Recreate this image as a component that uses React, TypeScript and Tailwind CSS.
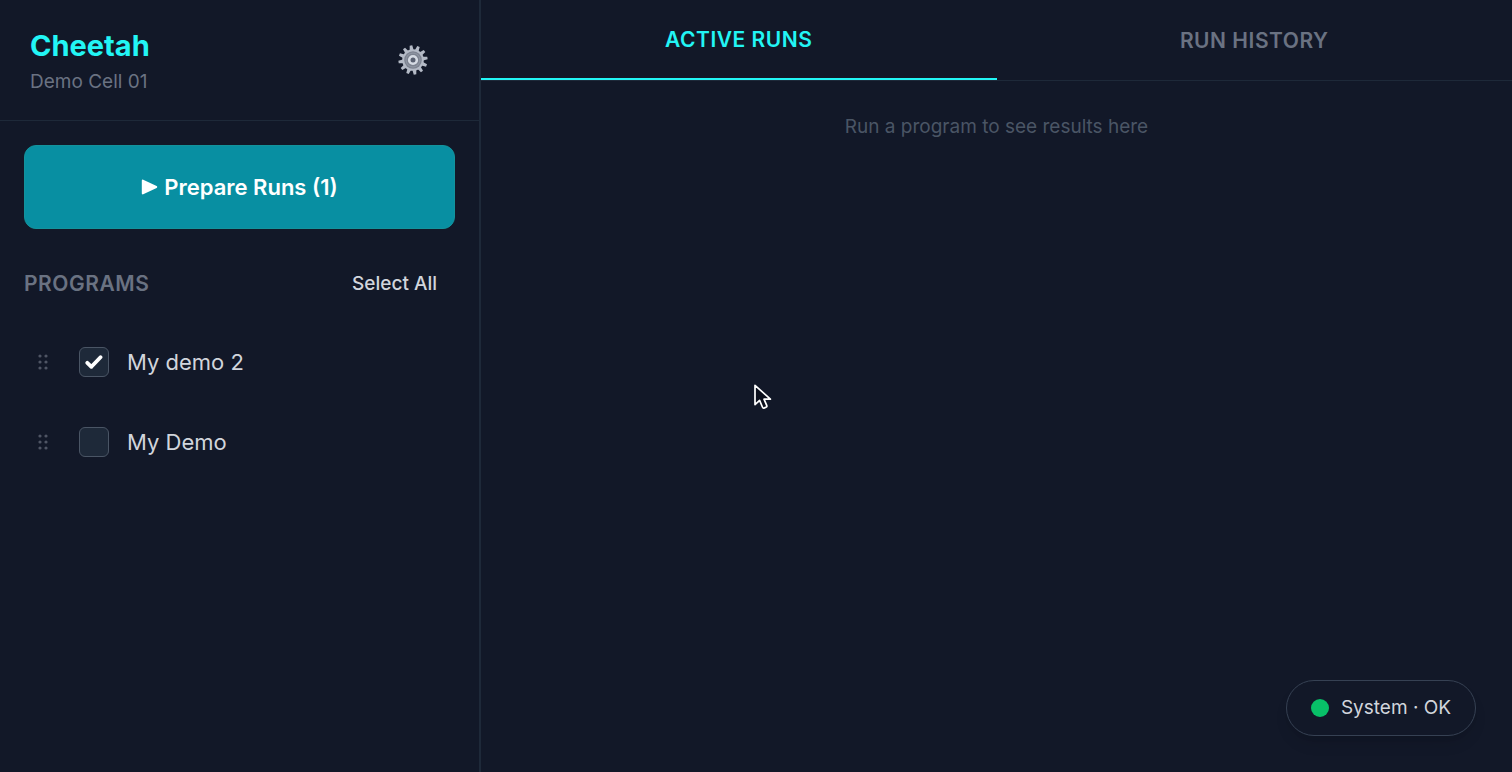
import { useState } from 'react';
import { clsx } from 'clsx';

type Program = { id: string; name: string };
type Tab = 'active' | 'history';

const programs: Program[] = [
  { id: 'demo-2', name: 'My demo 2' },
  { id: 'demo-1', name: 'My Demo' },
];

const tabs: { id: Tab; label: string }[] = [
  { id: 'active', label: 'Active Runs' },
  { id: 'history', label: 'Run History' },
];

const teeth = Array.from({ length: 12 }, (_, i) => i * 30 + 22);

function GearIcon() {
  return (
    <svg viewBox="0 0 30 30" className="size-[30px]" aria-hidden="true">
      {teeth.map((angle) => (
        <path key={angle} d="M13.1 5 L13.7 0.4 H16.3 L16.9 5 Z" fill="#b4bac6" transform={`rotate(${angle} 15 15)`} />
      ))}
      <circle cx="15" cy="15" r="10.8" fill="#b4bac6" />
      <circle cx="15" cy="15" r="8.8" fill="#7d8391" />
      <circle cx="15" cy="15" r="7" fill="none" stroke="#9299a6" strokeWidth="1" />
      <circle cx="15" cy="15" r="3.8" fill="#596071" stroke="#d5dae3" strokeWidth="2.6" />
    </svg>
  );
}

function GripIcon() {
  return (
    <svg viewBox="0 0 10 16" className="h-4 w-[10px]" fill="#4f5564" aria-hidden="true">
      {[2, 8, 14].map((y) => (
        <g key={y}>
          <circle cx="2" cy={y} r="1.6" />
          <circle cx="8" cy={y} r="1.6" />
        </g>
      ))}
    </svg>
  );
}

function ProgramRow({ program, checked, onToggle }: { program: Program; checked: boolean; onToggle: () => void }) {
  return (
    <li className="flex h-20 items-center pl-[14px]">
      <GripIcon />
      <label className="ml-[31px] flex cursor-pointer items-center gap-[18px] text-[22px] leading-8 text-gray-300">
        <span className="grid size-[30px] place-items-center">
          <input
            type="checkbox"
            checked={checked}
            onChange={onToggle}
            className="col-start-1 row-start-1 size-[30px] appearance-none rounded-md border border-gray-600 bg-gray-800"
          />
          {checked && (
            <svg viewBox="0 0 18 16" className="pointer-events-none col-start-1 row-start-1 h-4 w-[18px]" aria-hidden="true">
              <path d="M2.3 8.8 L6.4 12.8 L15.5 3.2" fill="none" stroke="#fff" strokeWidth="3.8" strokeLinecap="round" strokeLinejoin="round" />
            </svg>
          )}
        </span>
        {program.name}
      </label>
    </li>
  );
}

function Cursor() {
  return (
    <svg viewBox="0 0 20 28" className="pointer-events-none absolute top-[383px] left-[753px] h-7 w-5" aria-hidden="true">
      <path
        d="M2 2.4 V21.6 L6.6 17.4 L9.4 24 C9.8 25 10.4 25.3 11.4 24.9 L13 24.2 C13.9 23.8 14.1 23.2 13.7 22.3 L11 16.2 H17.4 Z"
        fill="#0b0f1c"
        stroke="#fff"
        strokeWidth="1.7"
        strokeLinejoin="round"
      />
    </svg>
  );
}

export default function App() {
  const [selected, setSelected] = useState<string[]>(['demo-2']);
  const [tab, setTab] = useState<Tab>('active');

  const toggle = (id: string) =>
    setSelected((prev) => (prev.includes(id) ? prev.filter((p) => p !== id) : [...prev, id]));

  return (
    <div className="relative flex min-h-screen bg-[#121828] font-['Inter',sans-serif]">
      <aside className="w-[481px] shrink-0 border-r-2 border-gray-800">
        <header className="flex items-center justify-between border-b border-gray-800 pt-6 pr-[51px] pb-6 pl-[30px]">
          <div>
            <h1 className="text-[29px] leading-11 font-bold text-[#22f5f5]">Cheetah</h1>
            <p className="text-[19px] leading-7 text-gray-500">Demo Cell 01</p>
          </div>
          <button type="button" aria-label="Settings" className="cursor-pointer">
            <GearIcon />
          </button>
        </header>

        <div className="p-6">
          <button
            type="button"
            className="flex h-[84px] w-full cursor-pointer items-center justify-center gap-[6px] rounded-xl border border-[#13939c] bg-[#088fa2] text-[22px] leading-8 font-semibold text-white"
          >
            <svg viewBox="0 0 17 16" className="h-4 w-[17px]" aria-hidden="true">
              <path d="M1.8 1.6 L15.2 8 L1.8 14.4 Z" fill="#fff" stroke="#fff" strokeWidth="2" strokeLinejoin="round" />
            </svg>
            Prepare Runs ({selected.length})
          </button>

          <div className="mt-[41px] flex items-center justify-between pr-[18px]">
            <h2 className="text-[21px] leading-7 font-semibold tracking-wide text-gray-500 uppercase">Programs</h2>
            <button
              type="button"
              onClick={() => setSelected(programs.map((p) => p.id))}
              className="cursor-pointer text-[19px] leading-7 font-medium text-gray-300"
            >
              Select All
            </button>
          </div>

          <ul className="mt-6">
            {programs.map((program) => (
              <ProgramRow
                key={program.id}
                program={program}
                checked={selected.includes(program.id)}
                onToggle={() => toggle(program.id)}
              />
            ))}
          </ul>
        </div>
      </aside>

      <main className="min-w-0 flex-1">
        <nav className="flex h-[81px] border-b border-gray-800">
          {tabs.map(({ id, label }) => (
            <button
              key={id}
              type="button"
              onClick={() => setTab(id)}
              className={clsx(
                'flex-1 cursor-pointer pt-0.5 text-[21px] leading-7 font-semibold tracking-wide uppercase',
                tab === id ? 'border-b-2 border-[#22f5f5] text-[#22f5f5]' : 'text-gray-500',
              )}
            >
              {label}
            </button>
          ))}
        </nav>
        <p className="mt-8 text-center text-[19px] leading-7 text-gray-600">
          {tab === 'active' ? 'Run a program to see results here' : 'No runs yet'}
        </p>
      </main>

      <div className="absolute right-9 bottom-9 flex h-14 items-center gap-3 rounded-full border border-gray-700 px-6 text-[19px] leading-7 text-gray-300 shadow-lg">
        <span className="size-[18px] rounded-full bg-[#08c068]" />
        System · OK
      </div>

      <Cursor />
    </div>
  );
}
